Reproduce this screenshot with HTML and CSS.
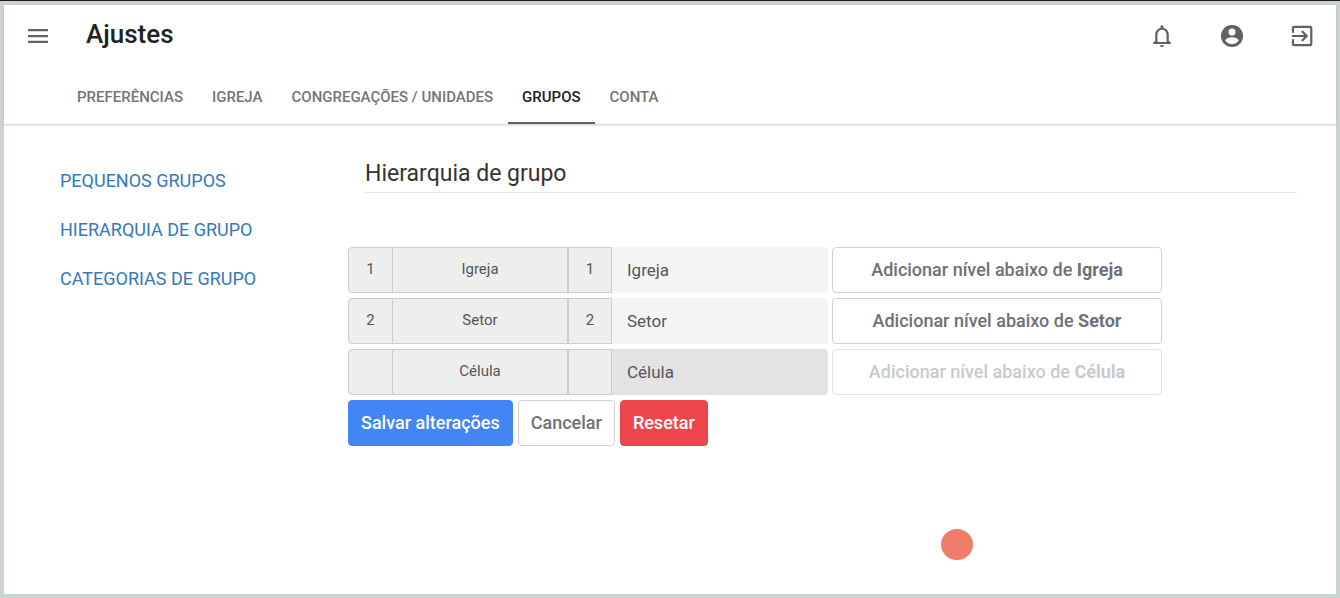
FILE: index.html
```
<!DOCTYPE html>
<html lang="pt-BR">
<head>
  <meta charset="UTF-8">
  <meta name="viewport" content="width=device-width, initial-scale=1.0">
  <title>Ajustes</title>
  <link rel="stylesheet" href="styles.css">
</head>
<body>
  <div class="page">

    <header class="header">
      <div class="topbar">
        <button type="button" class="icon-btn" aria-label="Menu">
          <svg viewBox="0 0 28 28"><path d="M4 7h20v2.300H4zM4 12.900h20v2.300H4zM4 18.700h20v2.300H4z"/></svg>
        </button>
        <h1>Ajustes</h1>
        <div class="actions">
          <button type="button" class="icon-btn" aria-label="Notificações">
            <svg viewBox="0 0 24 24"><path d="M12 21.500c1 0 1.800-.8 1.800-1.600h-3.600c0 .8.8 1.600 1.800 1.600zm5.800-5.200v-5.300c0-3-1.700-5.300-4.500-5.900V4c0-.7-.5-1.300-1.300-1.300s-1.300.6-1.300 1.300v1.100C7.900 5.700 6.200 8 6.200 11v5.300L4.400 17.500v1.300h15.200v-1.300l-1.800-1.200zm-1.900 .8H8.100V11c0-2.500 1.500-4.300 3.900-4.300s3.900 1.800 3.900 4.300v6.100z"/></svg>
          </button>
          <button type="button" class="icon-btn" aria-label="Perfil">
            <svg viewBox="0 0 24 24"><path d="M12 2.500a9.500 9.500 0 1 0 0 19a9.500 9.500 0 0 0 0-19zm0 3a3 3 0 1 1 0 6a3 3 0 0 1 0-6zm0 13.500c-2.400 0-4.500-1.200-5.700-3.100c0-1.900 3.800-2.900 5.700-2.900s5.700 1 5.700 2.900c-1.200 1.900-3.300 3.100-5.700 3.100z"/></svg>
          </button>
          <button type="button" class="icon-btn" aria-label="Sair">
            <svg viewBox="0 0 24 24"><path d="M11.200 15.600L12.500 16.900l4.900-4.900l-4.900-4.900l-1.300 1.300L13.800 11.100H3.400v1.800h10.400zM19 3.300H5.200a1.900 1.900 0 0 0-1.900 1.900v4h1.900V5.200H19v13.600H5.200v-4H3.300v4a1.900 1.900 0 0 0 1.900 1.900H19a1.900 1.900 0 0 0 1.900-1.900V5.200A1.900 1.900 0 0 0 19 3.300z"/></svg>
          </button>
        </div>
      </div>

      <nav class="tabs">
        <a href="#preferencias">PREFERÊNCIAS</a>
        <a href="#igreja">IGREJA</a>
        <a href="#congregacoes">CONGREGAÇÕES / UNIDADES</a>
        <a href="#grupos" class="active">GRUPOS</a>
        <a href="#conta">CONTA</a>
      </nav>
    </header>

    <div class="content">
      <nav class="sidebar">
        <a href="#pequenos">PEQUENOS GRUPOS</a>
        <a href="#hierarquia">HIERARQUIA DE GRUPO</a>
        <a href="#categorias">CATEGORIAS DE GRUPO</a>
      </nav>

      <main>
        <h2>Hierarquia de grupo</h2>

        <form class="levels">
          <div class="level">
            <span class="addon first">1</span>
            <label class="addon" for="level1">Igreja</label>
            <span class="addon">1</span>
            <input type="text" id="level1" value="Igreja">
            <button type="button" class="btn">Adicionar nível abaixo de <b>Igreja</b></button>
          </div>
          <div class="level">
            <span class="addon first">2</span>
            <label class="addon" for="level2">Setor</label>
            <span class="addon">2</span>
            <input type="text" id="level2" value="Setor">
            <button type="button" class="btn">Adicionar nível abaixo de <b>Setor</b></button>
          </div>
          <div class="level">
            <span class="addon first"></span>
            <label class="addon" for="level3">Célula</label>
            <span class="addon"></span>
            <input type="text" id="level3" value="Célula" disabled>
            <button type="button" class="btn" disabled>Adicionar nível abaixo de <b>Célula</b></button>
          </div>
          <div class="form-actions">
            <button type="submit" class="btn primary">Salvar alterações</button>
            <button type="button" class="btn">Cancelar</button>
            <button type="reset" class="btn danger">Resetar</button>
          </div>
        </form>
      </main>
    </div>

    <div class="pointer"></div>
  </div>
</body>
</html>
```

FILE: styles.css
```
* {
  box-sizing: border-box;
}

body {
  margin: 0;
  font-family: Roboto, sans-serif;
  color: #333;
  background-color: #cbd3ce;
  border-top: 1px solid #1d1c22;
}

.page {
  min-height: calc(100vh - 1px);
  background-color: #fff;
  border: 4px solid #cbd3ce;
  border-top-color: #d0d1d1;
}

/* header */
.header {
  border-bottom: 1px solid #d9d9d9;
  box-shadow: 0 1px 2px rgba(0, 0, 0, 0.1);
}

.topbar {
  display: flex;
  align-items: center;
  height: 62px;
  padding: 0 20px;
}

h1 {
  margin: 0 0 4px 34px;
  font-size: 26px;
  font-weight: 500;
  line-height: 30px;
  color: #212121;
}

.icon-btn {
  display: block;
  width: 28px;
  height: 28px;
  padding: 0;
  border: 0;
  background: none;
  cursor: pointer;
}

.icon-btn svg {
  display: block;
  width: 28px;
  height: 28px;
  fill: #616161;
}

.actions {
  display: flex;
  gap: 42px;
  margin-left: auto;
}

.tabs {
  display: flex;
  gap: 1px;
  padding-left: 59px;
}

.tabs a {
  padding: 21px 14px 16px;
  border-bottom: 2px solid transparent;
  font-size: 15px;
  font-weight: 500;
  line-height: 18px;
  color: #757575;
  text-decoration: none;
}

.tabs a.active {
  color: #212121;
  border-bottom-color: #616161;
}

/* content */
.content {
  display: flex;
  padding: 34px 39px 40px 56px;
}

.sidebar {
  display: flex;
  flex-direction: column;
  flex: 0 0 288px;
  gap: 25px;
  padding-top: 10px;
}

.sidebar a {
  font-size: 18px;
  line-height: 24px;
  color: #337ab7;
  text-decoration: none;
}

main {
  flex: 1;
  min-width: 0;
}

h2 {
  margin: 0 0 54px 17px;
  padding-bottom: 3px;
  border-bottom: 1px solid #e5e5e5;
  font-size: 23px;
  font-weight: 400;
  line-height: 30px;
}

.levels {
  display: flex;
  flex-direction: column;
  gap: 5px;
  max-width: 814px;
}

.level {
  display: grid;
  grid-template-columns: 45px 175px 44px 1fr 330px;
}

.addon {
  display: flex;
  align-items: center;
  justify-content: center;
  height: 46px;
  padding-bottom: 2px;
  border: 1px solid #ccc;
  border-left-width: 0;
  background-color: #eee;
  font-size: 15px;
  color: #555;
}

.addon.first {
  border-left-width: 1px;
  border-radius: 4px 0 0 4px;
}

.level label + .addon {
  border-left-width: 1px;
}

.level input {
  min-width: 0;
  height: 46px;
  margin-right: 4px;
  padding: 0 15px;
  border: 0;
  border-radius: 0 4px 4px 0;
  background-color: #f4f4f4;
  font-family: inherit;
  font-size: 17px;
  color: #55555a;
}

.level input:disabled {
  background-color: #e3e3e5;
}

.btn {
  height: 46px;
  padding: 0 12px 2px;
  border: 1px solid #d0d0d2;
  border-radius: 4px;
  background-color: #fff;
  font-family: inherit;
  font-size: 18px;
  font-weight: 500;
  color: #707076;
  cursor: pointer;
}

.btn:disabled {
  border-color: #e3e3e3;
  color: #c8caca;
}

.btn.primary {
  border-color: #4285f4;
  background-color: #4285f4;
  color: #fff;
}

.btn.danger {
  border-color: #ec464b;
  background-color: #ec464b;
  color: #fff;
}

.form-actions {
  display: flex;
  gap: 5px;
}

/* click marker floating over the page */
.pointer {
  position: absolute;
  left: 941px;
  top: 529px;
  width: 32px;
  height: 31px;
  border-radius: 50%;
  background-color: #f07d69;
}
```
